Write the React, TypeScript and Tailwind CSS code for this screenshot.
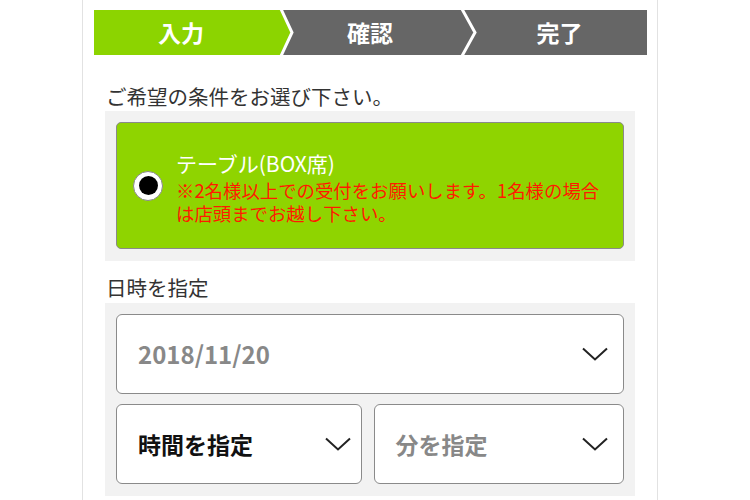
const jp = "font-['Noto_Sans_CJK_JP','Noto_Sans',sans-serif]";

function Chevron() {
  return (
    <svg width="26" height="14" viewBox="0 0 26 14" fill="none" className="shrink-0">
      <path d="M1 1.5 L13 12.5 L25 1.5" stroke="#222" strokeWidth="2" />
    </svg>
  );
}

function StepBar() {
  return (
    <div className="relative h-[45px] bg-[#666]">
      <svg className="absolute inset-0" width="553" height="45" viewBox="0 0 553 45">
        <polygon points="0,0 186,0 197,22.5 186,45 0,45" fill="#8cd400" />
        <polyline points="187,-1 198,22.5 187,46" fill="none" stroke="#fff" strokeWidth="3" />
        <polyline points="368,-1 381,22.5 368,46" fill="none" stroke="#fff" strokeWidth="3" />
      </svg>
      <div className="relative flex h-full items-center text-white font-bold text-[23px]">
        <div className="w-[174px] text-center">入力</div>
        <div className="w-[204px] text-center">確認</div>
        <div className="flex-1 text-center">完了</div>
      </div>
    </div>
  );
}

export default function App() {
  return (
    <div className={`min-h-[500px] w-[750px] bg-white ${jp}`}>
      <div className="ml-[82px] w-[576px] min-h-[500px] border-x border-[#e2e2e2] pt-[10px] pl-[11px] pr-[10px]">
        <StepBar />
        <div className="pl-[11px] pr-[12px]">
          <div className="mt-[27px] pl-px text-[20.5px] leading-[28px] text-[#333]">
            ご希望の条件をお選び下さい。
          </div>
          <div className="mt-[1px] bg-[#f2f2f2] p-[11px] pb-[12px]">
            <div className="flex h-[127px] items-center rounded-[5px] border border-[#8a8a8a] bg-[#8fd400] pl-[16px] pr-[10px]">
              <div className="flex h-[30px] w-[30px] shrink-0 items-center justify-center rounded-full border border-[#888] bg-white">
                <div className="h-[19px] w-[19px] rounded-full bg-black" />
              </div>
              <div className="ml-[13px] mt-[2px]">
                <div className="text-[21px] leading-[28px] text-white">テーブル(BOX席)</div>
                <div className="mt-[2px] text-[18.4px] leading-[23px] text-[#ff1a00]">
                  ※2名様以上での受付をお願いします。1名様の場合は店頭までお越し下さい。
                </div>
              </div>
            </div>
          </div>
          <div className="mt-[12px] pl-px text-[20.5px] leading-[28px] text-[#333]">日時を指定</div>
          <div className="mt-[2px] flex flex-col gap-[10px] bg-[#f2f2f2] p-[11px] pb-[12px]">
            <div className="flex h-[80px] items-center justify-between rounded-[6px] border border-[#8a8a8a] bg-white pl-[21px] pr-[15px]">
              <span className="text-[24px] font-bold text-[#888]">2018/11/20</span>
              <Chevron />
            </div>
            <div className="flex gap-[12px]">
              <div className="flex h-[80px] flex-1 items-center justify-between rounded-[6px] border border-[#8a8a8a] bg-white pl-[21px] pr-[10px]">
                <span className="text-[23px] font-bold text-[#111]">時間を指定</span>
                <Chevron />
              </div>
              <div className="flex h-[80px] flex-1 items-center justify-between rounded-[6px] border border-[#8a8a8a] bg-white pl-[21px] pr-[15px]">
                <span className="text-[23px] font-bold text-[#888]">分を指定</span>
                <Chevron />
              </div>
            </div>
          </div>
        </div>
      </div>
    </div>
  );
}
